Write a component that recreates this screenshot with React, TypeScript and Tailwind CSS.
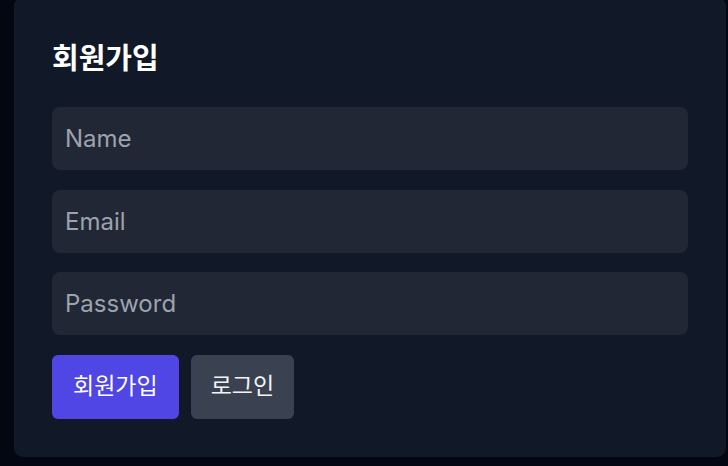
const FONT = { fontFamily: 'Inter, "Noto Sans CJK KR", sans-serif' };

function Field({ placeholder, type }: { placeholder: string; type: string }) {
  return (
    <input
      type={type}
      placeholder={placeholder}
      className="h-[63px] w-full rounded-[8px] bg-[#212734] px-[13px] text-[24px] text-white placeholder:text-[#9ca3af] outline-none"
    />
  );
}

export default function App() {
  return (
    <main className="min-h-[466px] bg-[#030712] pl-[14px] pr-[2px] pb-[9px]" style={FONT}>
      <div className="-mt-[3px] rounded-[9px] bg-[#111827] p-[38px]">
        <h1 className="text-[29px] font-bold leading-[48px] text-white">회원가입</h1>

        <form className="mt-[24px] flex flex-col gap-[19.5px]" onSubmit={(e) => e.preventDefault()}>
          <Field placeholder="Name" type="text" />
          <Field placeholder="Email" type="email" />
          <Field placeholder="Password" type="password" />

          <div className="flex gap-[12px]">
            <button
              type="submit"
              className="h-[64px] rounded-[6px] bg-[#4f46e5] px-[21px] text-[23px] text-white"
            >
              회원가입
            </button>
            <button
              type="button"
              className="h-[64px] rounded-[6px] bg-[#3a4151] px-[20px] text-[23px] text-[#f3f4f6]"
            >
              로그인
            </button>
          </div>
        </form>
      </div>
    </main>
  );
}
